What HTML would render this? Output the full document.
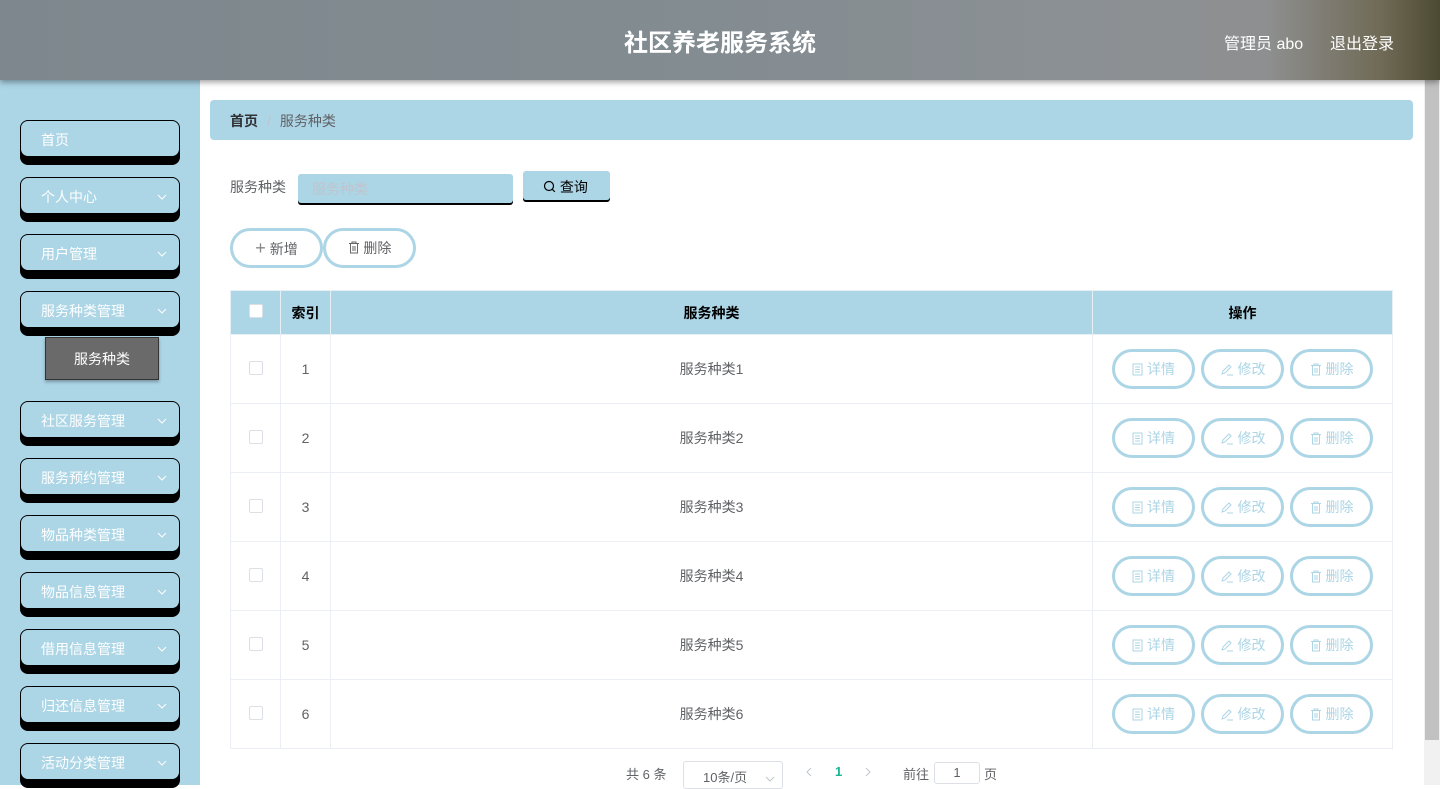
<!DOCTYPE html>
<html><head><meta charset="utf-8"><style>
*{box-sizing:border-box;margin:0;padding:0}
body{width:1440px;height:785px;overflow:hidden;background:#fff;font-family:"Liberation Sans","Noto Sans CJK SC",sans-serif;font-size:14px;color:#606266;position:relative}
.hdr{position:absolute;left:0;top:0;width:1440px;height:80px;background:linear-gradient(90deg,#7d878d 0%,#838c91 50%,#8b9094 75%,#8e8f90 88%,#6f6a55 96%,#4d4a33 100%);box-shadow:0 2px 6px rgba(0,0,0,.4);z-index:5}
.hdr .t{position:absolute;left:0;width:1440px;top:23px;text-align:center;color:#fff;font-size:24px;font-weight:bold}
.hdr .u{position:absolute;left:1224px;top:30px;color:#fff;font-size:16px}
.hdr .o{position:absolute;left:1330px;top:30px;color:#fff;font-size:16px}
.side{position:absolute;left:0;top:80px;width:200px;height:705px;background:#acd5e6}
.mi{position:absolute;left:20px;width:160px;height:37px;border:1px solid #000;border-radius:8px;background:#acd5e6;box-shadow:0 8px 0 #000;color:#fff;font-size:14px;padding:9px 0 0 20px}
.mi svg{position:absolute;right:12px;top:16px}
.sub{position:absolute;left:45px;top:337px;width:114px;height:43px;background:#6a6a6a;color:#fff;text-align:center;line-height:43px;border:1px solid #333;box-shadow:0 2px 3px rgba(0,0,0,.3)}
.sb{position:absolute;left:1424px;top:53px;width:16px;height:732px;background:#f1f1f1}
.sb div{position:absolute;left:1px;top:0;width:14px;height:687px;background:#c1c1c1}
.bc{position:absolute;left:210px;top:100px;width:1203px;height:40px;background:#acd5e6;border-radius:4px;padding:11px 20px;font-size:14px}
.bc b{color:#303133}
.btn{position:absolute;height:40px;border:3px solid #acd5e6;border-radius:20px;background:#fff;color:#606266;font-size:14px;text-align:center;line-height:34px}
table{position:absolute;left:230px;top:290px;width:1163px;border-collapse:collapse}
td,th{border:1px solid #ebeef5;text-align:center}
th{background:#acd5e6;height:44px;color:#000;font-size:14px;border-color:#e6f0f4}
td{height:69px;color:#606266}
.cb{display:inline-block;width:14px;height:14px;border:1px solid #dcdfe6;border-radius:2px;background:#fff}
.ob{display:inline-block;width:83px;height:40px;border:3px solid #acd5e6;border-radius:20px;color:#acd5e6;line-height:34px;margin:0 3px;font-size:14px}
.ob svg{vertical-align:-2px;margin-right:4px}
</style></head><body>
<div class="hdr"><div class="t">社区养老服务系统</div><div class="u">管理员 abo</div><div class="o">退出登录</div></div>
<div class="side">
<div class="mi" style="top:40px">首页</div>
<div class="mi" style="top:97px">个人中心<svg width="10" height="6"><path d="M1 1l4 4 4-4" stroke="#fff" fill="none"/></svg></div>
<div class="mi" style="top:154px">用户管理<svg width="10" height="6"><path d="M1 1l4 4 4-4" stroke="#fff" fill="none"/></svg></div>
<div class="mi" style="top:211px">服务种类管理<svg width="10" height="6"><path d="M1 1l4 4 4-4" stroke="#fff" fill="none"/></svg></div>
<div class="mi" style="top:321px">社区服务管理<svg width="10" height="6"><path d="M1 1l4 4 4-4" stroke="#fff" fill="none"/></svg></div>
<div class="mi" style="top:378px">服务预约管理<svg width="10" height="6"><path d="M1 1l4 4 4-4" stroke="#fff" fill="none"/></svg></div>
<div class="mi" style="top:435px">物品种类管理<svg width="10" height="6"><path d="M1 1l4 4 4-4" stroke="#fff" fill="none"/></svg></div>
<div class="mi" style="top:492px">物品信息管理<svg width="10" height="6"><path d="M1 1l4 4 4-4" stroke="#fff" fill="none"/></svg></div>
<div class="mi" style="top:549px">借用信息管理<svg width="10" height="6"><path d="M1 1l4 4 4-4" stroke="#fff" fill="none"/></svg></div>
<div class="mi" style="top:606px">归还信息管理<svg width="10" height="6"><path d="M1 1l4 4 4-4" stroke="#fff" fill="none"/></svg></div>
<div class="mi" style="top:663px">活动分类管理<svg width="10" height="6"><path d="M1 1l4 4 4-4" stroke="#fff" fill="none"/></svg></div>
</div>
<div class="sub">服务种类</div>
<div class="sb"><div></div></div>
<div class="bc"><b>首页</b><span style="color:#c0c4cc;margin:0 9px">/</span>服务种类</div>
<div style="position:absolute;left:230px;top:177px;color:#606266">服务种类</div>
<div style="position:absolute;left:298px;top:174px;width:215px;height:29px;background:#acd5e6;border-radius:3px;box-shadow:0 2px 0 #000;color:#c0c4cc;padding:5px 14px">服务种类</div>
<div style="position:absolute;left:523px;top:171px;width:87px;height:29px;background:#acd5e6;border-radius:3px;box-shadow:0 2px 0 #000;color:#000;padding:6px 0 0 20px"><svg width="13" height="13" style="vertical-align:-1px"><circle cx="6" cy="6" r="4.5" stroke="#000" fill="none" stroke-width="1.2"/><path d="M9.3 9.3l2.5 2.5" stroke="#000" stroke-width="1.2"/></svg> 查询</div>
<div class="btn" style="left:230px;top:228px;width:93px"><span style="font-size:18px;color:#888">+</span> 新增</div>
<div class="btn" style="left:323px;top:228px;width:93px"><svg width="12" height="13" style="vertical-align:-1px"><path d="M1 2.5h10M4 2.5V1h4v1.5M2.5 2.5v9.5h7V2.5M5 5v5M7 5v5" stroke="#666" fill="none"/></svg> 删除</div>
<table>
<tr><th style="width:50px"><span class="cb"></span></th><th style="width:50px">索引</th><th>服务种类</th><th style="width:300px">操作</th></tr>
<tr><td><span class="cb"></span></td><td>1</td><td>服务种类1</td><td class="ops"></td></tr>
<tr><td><span class="cb"></span></td><td>2</td><td>服务种类2</td><td class="ops"></td></tr>
<tr><td><span class="cb"></span></td><td>3</td><td>服务种类3</td><td class="ops"></td></tr>
<tr><td><span class="cb"></span></td><td>4</td><td>服务种类4</td><td class="ops"></td></tr>
<tr><td><span class="cb"></span></td><td>5</td><td>服务种类5</td><td class="ops"></td></tr>
<tr><td><span class="cb"></span></td><td>6</td><td>服务种类6</td><td class="ops"></td></tr>
</table>
<template id="op"><span class="ob"><svg width="11" height="13"><path d="M1 1h9v11H1zM3 4h5M3 6.5h5M3 9h5" stroke="#acd5e6" fill="none"/></svg>详情</span><span class="ob"><svg width="14" height="13"><path d="M2 11l1-3 6-6 2 2-6 6zM7 12h6" stroke="#acd5e6" fill="none"/></svg>修改</span><span class="ob"><svg width="12" height="13"><path d="M1 2.5h10M4 2.5V1h4v1.5M2.5 2.5v9.5h7V2.5M5 5v5M7 5v5" stroke="#acd5e6" fill="none"/></svg>删除</span></template>
<script>var t=document.getElementById('op').innerHTML;document.querySelectorAll('.ops').forEach(function(e){e.innerHTML=t});</script>
<div style="position:absolute;left:626px;top:764px;font-size:13px">共 6 条</div>
<div style="position:absolute;left:683px;top:761px;width:100px;height:28px;border:1px solid #dcdfe6;border-radius:3px;padding:5px 0 0 19px;font-size:13px">10条/页<svg width="10" height="6" style="margin-left:18px"><path d="M1 1l4 4 4-4" stroke="#c0c4cc" fill="none"/></svg></div>
<svg style="position:absolute;left:806px;top:767px" width="6" height="10"><path d="M5 1L1 5l4 4" stroke="#c0c4cc" fill="none"/></svg>
<div style="position:absolute;left:835px;top:764px;color:#1ab394;font-weight:bold;font-size:13px">1</div>
<svg style="position:absolute;left:865px;top:767px" width="6" height="10"><path d="M1 1l4 4-4 4" stroke="#c0c4cc" fill="none"/></svg>
<div style="position:absolute;left:903px;top:764px;font-size:13px">前往</div>
<div style="position:absolute;left:934px;top:762px;width:46px;height:22px;border:1px solid #dcdfe6;border-radius:3px;text-align:center;font-size:13px;line-height:20px">1</div>
<div style="position:absolute;left:984px;top:764px;font-size:13px">页</div>
</body></html>
